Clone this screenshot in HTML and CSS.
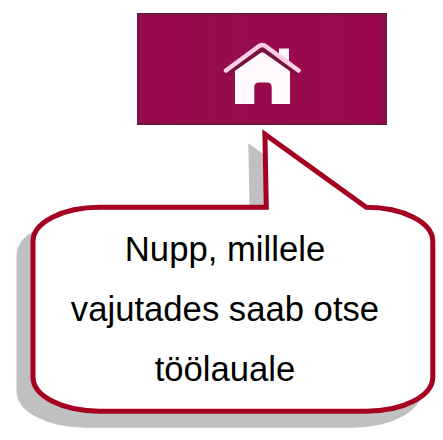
FILE: index.html
```html
<!DOCTYPE html>
<html lang="et">
<head>
<meta charset="utf-8">
<title>Töölaud</title>
<link rel="stylesheet" href="styles.css">
</head>
<body>
<main class="figure">
  <button class="home-button" type="button">
    <svg class="home-icon" viewBox="0 0 82 66" aria-hidden="true">
      <path class="home-body" d="M58 18V7.500H68V28ZM41.300 10.500L69 29V63H50.700V46Q50.700 41.500 46 41.500H38Q33.300 41.500 33.300 46V63H14V29Z"/>
      <path class="roof-gap" d="M8.500 31.500L38.500 10.300Q41.300 8.500 44 10.300L74 31.500"/>
      <path class="roof" d="M5 29.500L37.500 5.500Q41.300 2.500 45 5.500L77.500 29.500"/>
    </svg>
  </button>
  <section class="callout">
    <svg class="callout-shape" viewBox="0 0 443 440" aria-hidden="true">
      <defs>
        <path id="bubble" d="M99.600 207.200H266.300L264.900 134.200L366.200 207.200C403 207.200 432.800 222.400 432.800 241.200V377.200C432.800 396 403 411.200 366.200 411.200H99.600C62.800 411.200 33 396 33 377.200V241.200C33 222.400 62.800 207.200 99.600 207.200Z"/>
      </defs>
      <use class="bubble-shadow" href="#bubble" x="-14" y="14"/>
      <use class="bubble" href="#bubble"/>
    </svg>
    <p class="callout-text">Nupp, millele<br>vajutades saab otse<br>töölauale</p>
  </section>
</main>
</body>
</html>
```
FILE: styles.css
```css
body {
  margin: 0;
  background: #fff;
  overflow: hidden;
}

.figure {
  position: relative;
  box-sizing: border-box;
  width: 443px;
  height: 440px;
  padding-top: 13px;
}

.home-button {
  display: flex;
  justify-content: center;
  box-sizing: border-box;
  width: 250px;
  height: 112px;
  margin: 0 0 0 137px;
  padding: 26px 0 0;
  border: 2px solid #6f1644;
  background: linear-gradient(90deg, #930b4a, #9b084e 12%, #940d4b 25%, #980a4d 60%, #960c4c 80%, #9d074e 95%, #920c4a);
}

.home-icon {
  width: 82px;
  height: 66px;
  overflow: visible;
  filter: blur(0.6px);
}

.home-body {
  fill: #fff8fd;
}

.roof,
.roof-gap {
  fill: none;
  stroke-linecap: round;
  stroke-linejoin: round;
}

.roof-gap {
  stroke: #74143f;
  stroke-width: 3.6;
}

.roof {
  stroke: #fccde5;
  stroke-width: 4.6;
}

.callout-shape {
  position: absolute;
  inset: 0;
  width: 443px;
  height: 440px;
}

.bubble {
  fill: #fff;
  stroke: #a50021;
  stroke-width: 5;
}

.bubble-shadow {
  fill: #c0c0c0;
  stroke: #c0c0c0;
  stroke-width: 5;
}

.callout-text {
  position: relative;
  width: 450px;
  margin: 94px 0 0;
  font: 34.67px/60px "Liberation Sans", Arial, sans-serif;
  text-align: center;
  color: #000;
}
```
